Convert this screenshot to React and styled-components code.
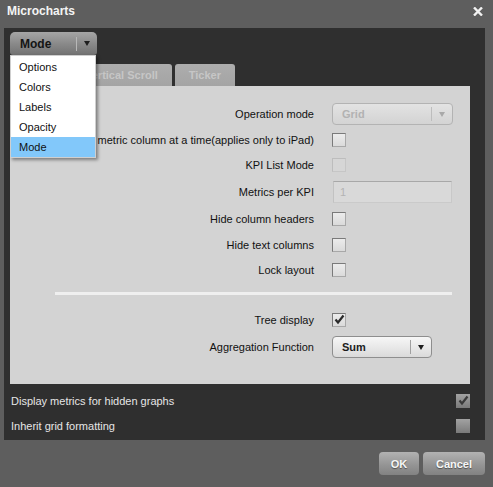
import React from 'react';
import styled, { createGlobalStyle } from 'styled-components';

const Global = createGlobalStyle`
  html, body { margin: 0; padding: 0; background: #5e5e5e; }
  body { font-family: "Liberation Sans", Arial, sans-serif; }
  * { box-sizing: border-box; }
`;

const Window = styled.div`
  width: 493px;
  height: 487px;
  background: #5e5e5e;
  display: flex;
  flex-direction: column;
  overflow: hidden;
`;

const TitleBar = styled.div`
  height: 28px;
  display: flex;
  align-items: flex-start;
  justify-content: space-between;
  padding: 4px 10px 0 7px;
  color: #f4f4f4;
  font-weight: bold;
  font-size: 12px;
  line-height: 14px;
`;

const Close = styled.svg`
  margin-top: 3px;
`;

const Panel = styled.div`
  margin-left: 4px;
  width: 481px;
  height: 412px;
  background: #2f2f2f;
  padding: 4px 15px 0 6px;
  display: flex;
  flex-direction: column;
`;

const ModeWrap = styled.div`
  position: relative;
  width: 87px;
  height: 22px;
  z-index: 5;
`;

const ModeButton = styled.div`
  width: 87px;
  height: 23px;
  border-radius: 5px 5px 3px 3px;
  background: linear-gradient(#a6a6a6, #8a8a8a 50%, #727272);
  display: flex;
  align-items: center;
  padding-left: 10px;
  font-size: 12px;
  font-weight: bold;
  color: #141414;
`;

const ModeText = styled.span`
  flex: 1;
`;

const BtnDivider = styled.span`
  width: 1px;
  height: 14px;
  background: #b8b8b8;
`;

const ArrowBox = styled.span`
  width: ${p => p.$w || 21}px;
  display: flex;
  justify-content: center;
  align-items: center;
`;

const Triangle = styled.span`
  width: 0;
  height: 0;
  border-left: 3.5px solid transparent;
  border-right: 3.5px solid transparent;
  border-top: 5px solid ${p => p.$c || '#1e1e1e'};
`;

const Menu = styled.div`
  position: absolute;
  left: 0;
  top: 23px;
  width: 86px;
  background: #fff;
  border: 1px solid #cfcfcf;
  padding-top: 1px;
  box-shadow: 2px 2px 3px rgba(0, 0, 0, 0.4);
`;

const MenuItem = styled.div`
  height: 20px;
  line-height: 20px;
  padding-left: 8px;
  font-size: 11px;
  color: #111;
  background: ${p => (p.$active ? '#82c8fa' : 'transparent')};
`;

const Tabs = styled.div`
  display: flex;
  gap: 3px;
  margin-top: 10px;
  height: 22px;
`;

const Tab = styled.div`
  height: 22px;
  min-width: ${p => p.$w || 0}px;
  padding: 0 14px;
  text-align: center;
  border-radius: 3px 3px 0 0;
  background: ${p => (p.$active ? '#d3d3d3' : 'linear-gradient(#adadad, #a4a4a4)')};
  color: ${p => (p.$active ? '#222' : '#c6c6c6')};
  font-size: 11px;
  font-weight: bold;
  line-height: 22px;
`;

const Content = styled.div`
  height: 298px;
  background: #d3d3d3;
  padding-top: 15px;
  display: flex;
  flex-direction: column;
`;

const Row = styled.div`
  height: ${p => p.$h}px;
  display: grid;
  grid-template-columns: 304px auto;
  column-gap: 18px;
  align-items: center;
`;

const Label = styled.div`
  text-align: right;
  white-space: nowrap;
  font-size: 11px;
  color: #111;
`;

const Box = styled.div`
  width: 14px;
  height: 14px;
  border: 1px solid;
  border-color: ${p => (p.$disabled ? '#bdbdbd #c6c6c6 #c6c6c6 #bdbdbd' : '#7a7a7a #a8a8a8 #a8a8a8 #7a7a7a')};
  background: ${p => (p.$disabled ? '#d6d6d6' : 'linear-gradient(#ececec, #dadada)')};
  display: flex;
  align-items: center;
  justify-content: center;
`;

const DarkBox = styled.div`
  width: 14px;
  height: 14px;
  background: linear-gradient(#a2a2a2, #7a7a7a);
  display: flex;
  align-items: center;
  justify-content: center;
`;

const Check = ({ color = '#2a2a2a' }) => (
  <svg width="11" height="11" viewBox="0 0 11 11">
    <path d="M1.5 5.5 L4 8.5 L9.5 1.5" fill="none" stroke={color} strokeWidth="2.2" strokeLinejoin="miter" />
  </svg>
);

const SelectBox = styled.div`
  width: ${p => p.$w}px;
  height: 22px;
  border-radius: 4px;
  border: 1px solid ${p => (p.$disabled ? '#b3b3b3' : '#8e8e8e')};
  background: ${p => (p.$disabled ? 'linear-gradient(#e3e3e3, #d3d3d3)' : 'linear-gradient(#f7f7f7, #dadada)')};
  display: flex;
  align-items: center;
  padding-left: 9px;
  font-size: 11px;
  font-weight: bold;
  color: ${p => (p.$disabled ? '#b2b2b2' : '#1c1c1c')};
`;

const SelectValue = styled.span`
  flex: 1;
`;

const SelDivider = styled.span`
  width: 1px;
  height: 14px;
  background: ${p => (p.$disabled ? '#bdbdbd' : '#a0a0a0')};
`;

const Input = styled.div`
  width: 119px;
  height: 22px;
  margin-left: 1px;
  border: 1px solid;
  border-color: #a8a8a8 #c8c8c8 #cacaca #c2c2c2;
  background: #d9d9d9;
  font-size: 11px;
  color: #b3b3b3;
  line-height: 20px;
  padding-left: 6px;
`;

const Divider = styled.div`
  height: 3px;
  background: #efefef;
  margin: 10px 18px 12px 45px;
`;

const Options = styled.div`
  padding-top: 4px;
`;

const OptionRow = styled.div`
  height: 25px;
  display: flex;
  align-items: center;
  justify-content: space-between;
  padding-left: 1px;
  font-size: 11px;
  color: #e6e6e6;
`;

const Footer = styled.div`
  display: flex;
  justify-content: flex-end;
  gap: 4px;
  padding: 12px 8px 0 0;
`;

const Button = styled.div`
  width: ${p => p.$w}px;
  height: 23px;
  border-radius: 4px;
  background: linear-gradient(#b2b2b2, #959595 55%, #828282);
  color: #f6f6f6;
  font-size: 11px;
  font-weight: bold;
  display: flex;
  align-items: center;
  justify-content: center;
  text-shadow: 0 1px 1px rgba(0, 0, 0, 0.45);
`;

const Select = ({ w, value, disabled }) => (
  <SelectBox $w={w} $disabled={disabled}>
    <SelectValue>{value}</SelectValue>
    <SelDivider $disabled={disabled} />
    <ArrowBox $w={20}>
      <Triangle $c={disabled ? '#a9a9a9' : '#1e1e1e'} />
    </ArrowBox>
  </SelectBox>
);

export default function App() {
  return (
    <>
      <Global />
      <Window>
        <TitleBar>
          <span>Microcharts</span>
          <Close width="10" height="9" viewBox="0 0 10 9">
            <path d="M1 0.5 L9 8.5 M9 0.5 L1 8.5" stroke="#f2f2f2" strokeWidth="2.4" />
          </Close>
        </TitleBar>
        <Panel>
          <ModeWrap>
            <ModeButton>
              <ModeText>Mode</ModeText>
              <BtnDivider />
              <ArrowBox $w={20}>
                <Triangle />
              </ArrowBox>
            </ModeButton>
            <Menu>
              <MenuItem>Options</MenuItem>
              <MenuItem>Colors</MenuItem>
              <MenuItem>Labels</MenuItem>
              <MenuItem>Opacity</MenuItem>
              <MenuItem $active>Mode</MenuItem>
            </Menu>
          </ModeWrap>
          <Tabs>
            <Tab $active $w={58}>Grid</Tab>
            <Tab>Vertical Scroll</Tab>
            <Tab>Ticker</Tab>
          </Tabs>
          <Content>
            <Row $h={26}>
              <Label>Operation mode</Label>
              <Select w={121} value="Grid" disabled />
            </Row>
            <Row $h={25}>
              <Label>Show one metric column at a time(applies only to iPad)</Label>
              <Box />
            </Row>
            <Row $h={26}>
              <Label>KPI List Mode</Label>
              <Box $disabled />
            </Row>
            <Row $h={28}>
              <Label>Metrics per KPI</Label>
              <Input>1</Input>
            </Row>
            <Row $h={26}>
              <Label>Hide column headers</Label>
              <Box />
            </Row>
            <Row $h={25}>
              <Label>Hide text columns</Label>
              <Box />
            </Row>
            <Row $h={25}>
              <Label>Lock layout</Label>
              <Box />
            </Row>
            <Divider />
            <Row $h={25}>
              <Label>Tree display</Label>
              <Box>
                <Check />
              </Box>
            </Row>
            <Row $h={30}>
              <Label>Aggregation Function</Label>
              <Select w={100} value="Sum" />
            </Row>
          </Content>
          <Options>
            <OptionRow>
              <span>Display metrics for hidden graphs</span>
              <DarkBox>
                <Check color="#3a3a3a" />
              </DarkBox>
            </OptionRow>
            <OptionRow>
              <span>Inherit grid formatting</span>
              <DarkBox />
            </OptionRow>
          </Options>
        </Panel>
        <Footer>
          <Button $w={40}>OK</Button>
          <Button $w={62}>Cancel</Button>
        </Footer>
      </Window>
    </>
  );
}
